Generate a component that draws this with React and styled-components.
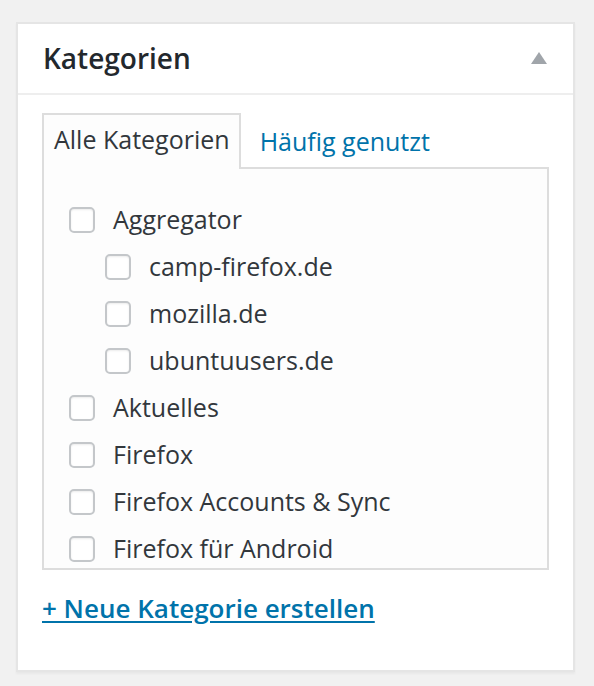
import styled, { createGlobalStyle } from "styled-components";

const GlobalStyle = createGlobalStyle`
  html, body {
    margin: 0;
    padding: 0;
    background: #f1f1f1;
    font-family: "Open Sans", "Noto Sans", sans-serif;
    color: #32373c;
  }
`;

const Page = styled.div`
  padding: 22px 19px 14px 16px;
`;

const Box = styled.div`
  background: #fff;
  border: 2px solid #e5e5e5;
  box-shadow: 0 2px 2px rgba(0, 0, 0, 0.04);
`;

const Header = styled.div`
  display: flex;
  align-items: center;
  justify-content: space-between;
  padding: 16px 26px 17px 25px;
  border-bottom: 2px solid #eee;
`;

const Title = styled.h2`
  margin: 0;
  font-size: 28px;
  line-height: 36px;
  font-weight: 600;
  color: #23282d;
`;

const Toggle = styled.svg`
  width: 16px;
  height: 12px;
  fill: #a0a5aa;
`;

const Inside = styled.div`
  padding: 18px 24px 44px;
`;

const Tabs = styled.div`
  display: flex;
  align-items: flex-end;
  margin-bottom: -2px;
  position: relative;
`;

const Tab = styled.div`
  padding: 0 9px 4px 10px;
  margin-right: ${(p) => (p.$active ? "7px" : "0")};
  font-size: 25px;
  line-height: 48px;
  color: ${(p) => (p.$active ? "#32373c" : "#0073aa")};
  background: ${(p) => (p.$active ? "#fdfdfd" : "transparent")};
  border: 2px solid ${(p) => (p.$active ? "#ddd" : "transparent")};
  border-bottom: none;
  padding-bottom: ${(p) => (p.$active ? "6px" : "4px")};
`;

const Panel = styled.div`
  box-sizing: border-box;
  height: 403px;
  overflow: hidden;
  background: #fdfdfd;
  border: 2px solid #ddd;
  padding: 27px 25px 0;
`;

const List = styled.ul`
  list-style: none;
  margin: 0;
  padding: 0;
`;

const Item = styled.li`
  display: flex;
  align-items: center;
  gap: 18px;
  height: 47px;
  padding-left: ${(p) => p.$level * 36}px;
  font-size: 25px;
  line-height: 47px;
  white-space: nowrap;
`;

const Check = styled.span`
  flex: none;
  width: 26px;
  height: 26px;
  box-sizing: border-box;
  border: 2px solid #c4c7ca;
  border-radius: 5px;
  background: #fff;
  box-shadow: inset 0 1px 2px rgba(0, 0, 0, 0.08);
`;

const AddLink = styled.a`
  display: inline-block;
  margin-top: 20px;
  font-size: 26px;
  line-height: 36px;
  font-weight: 600;
  color: #0073aa;
  text-decoration: underline;
  text-underline-offset: 3px;
  text-decoration-thickness: 2px;
`;

const categories = [
  { name: "Aggregator", level: 0 },
  { name: "camp-firefox.de", level: 1 },
  { name: "mozilla.de", level: 1 },
  { name: "ubuntuusers.de", level: 1 },
  { name: "Aktuelles", level: 0 },
  { name: "Firefox", level: 0 },
  { name: "Firefox Accounts & Sync", level: 0 },
  { name: "Firefox für Android", level: 0 },
];

export default function App() {
  return (
    <Page>
      <GlobalStyle />
      <Box>
        <Header>
          <Title>Kategorien</Title>
          <Toggle viewBox="0 0 16 12">
            <polygon points="8,0 16,12 0,12" />
          </Toggle>
        </Header>
        <Inside>
          <Tabs>
            <Tab $active>Alle Kategorien</Tab>
            <Tab>Häufig genutzt</Tab>
          </Tabs>
          <Panel>
            <List>
              {categories.map((c) => (
                <Item key={c.name} $level={c.level}>
                  <Check />
                  {c.name}
                </Item>
              ))}
            </List>
          </Panel>
          <AddLink href="#">+ Neue Kategorie erstellen</AddLink>
        </Inside>
      </Box>
    </Page>
  );
}
